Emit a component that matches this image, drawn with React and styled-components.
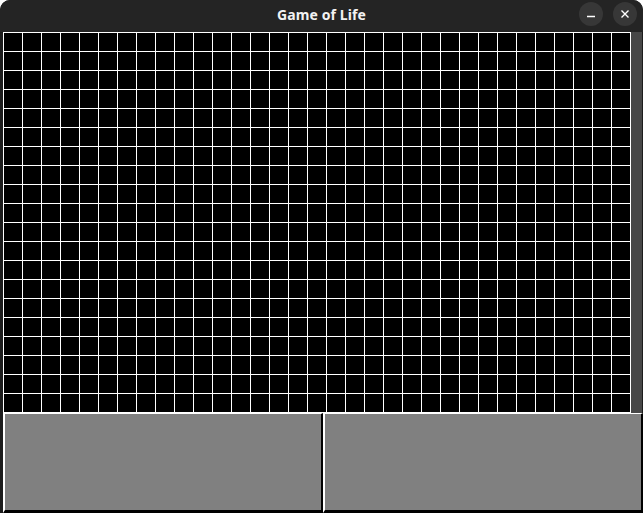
import React from 'react';
import styled, { createGlobalStyle } from 'styled-components';

const COLS = 33;
const ROWS = 20;

const GlobalStyle = createGlobalStyle`
  html, body {
    margin: 0;
    padding: 0;
    background: #ffffff;
  }
  body {
    font-family: "Noto Sans", "DejaVu Sans", sans-serif;
  }
`;

const Window = styled.div`
  width: 643px;
  height: 513px;
  display: flex;
  flex-direction: column;
  background: #1c1c1c;
  border-radius: 10px 10px 0 0;
  overflow: hidden;
`;

const TitleBar = styled.div`
  position: relative;
  height: 32px;
  flex: none;
  display: flex;
  align-items: center;
  justify-content: center;
  background: #242424;
`;

const Title = styled.span`
  color: #f2f2f2;
  font-size: 14px;
  font-weight: 700;
  letter-spacing: 0.1px;
  margin-top: -4px;
`;

const Controls = styled.div`
  position: absolute;
  right: 6px;
  top: 2px;
  display: flex;
  gap: 10px;
`;

const RoundButton = styled.div`
  width: 24px;
  height: 24px;
  border-radius: 50%;
  background: #373737;
  display: flex;
  align-items: center;
  justify-content: center;
`;

const Body = styled.div`
  flex: 1;
  display: flex;
  flex-direction: column;
  padding-left: 3px;
`;

const Canvas = styled.div`
  width: 639px;
  height: 381px;
  background: #474747;
  flex: none;
`;

const Board = styled.div`
  display: grid;
  grid-template-columns: repeat(${COLS}, 18px);
  grid-auto-rows: 18px;
  gap: 1px;
  padding: 1px;
  width: max-content;
  background: #ffffff;
`;

const Cell = styled.div`
  background: ${({ $alive }) => ($alive ? '#ffffff' : '#000000')};
`;

const ButtonRow = styled.div`
  display: flex;
  height: 100px;
  flex: none;
`;

const PanelButton = styled.div`
  width: 320px;
  box-sizing: border-box;
  background: #808080;
  border-style: solid;
  border-width: 1px 2px 3px 2px;
  border-color: #ffffff #000000 #000000 #ffffff;
`;

export default function App() {
  const cells = Array.from({ length: COLS * ROWS }, (_, i) => i);

  return (
    <>
      <GlobalStyle />
      <Window>
        <TitleBar>
          <Title>Game of Life</Title>
          <Controls>
            <RoundButton>
              <svg width="10" height="10" viewBox="0 0 10 10">
                <path d="M1 7.5h8" stroke="#ffffff" strokeWidth="1.3" />
              </svg>
            </RoundButton>
            <RoundButton>
              <svg width="10" height="10" viewBox="0 0 10 10">
                <path d="M1.5 1.5l7 7M8.5 1.5l-7 7" stroke="#ffffff" strokeWidth="1.4" />
              </svg>
            </RoundButton>
          </Controls>
        </TitleBar>
        <Body>
          <Canvas>
            <Board>
              {cells.map((i) => (
                <Cell key={i} />
              ))}
            </Board>
          </Canvas>
          <ButtonRow>
            <PanelButton />
            <PanelButton />
          </ButtonRow>
        </Body>
      </Window>
    </>
  );
}
